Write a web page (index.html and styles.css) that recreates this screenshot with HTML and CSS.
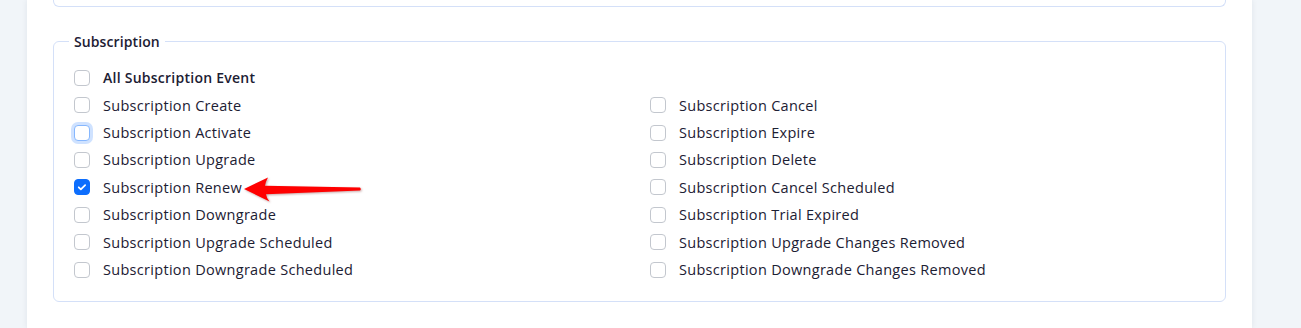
FILE: index.html
```html
<!DOCTYPE html>
<html lang="en">
<head>
  <meta charset="UTF-8" />
  <title>Subscription Events</title>
  <link rel="stylesheet" href="styles.css">
</head>
<body>
  <div class="page">
    <div class="top-box"></div>

    <fieldset class="group">
      <legend>Subscription</legend>

      <label class="check all"><span class="box"></span>All Subscription Event</label>

      <div class="grid">
        <div class="col">
          <label class="check"><span class="box"></span>Subscription Create</label>
          <label class="check"><span class="box focus"></span>Subscription Activate</label>
          <label class="check"><span class="box"></span>Subscription Upgrade</label>
          <label class="check"><span class="box checked"><svg viewBox="0 0 16 16" width="16" height="16"><path d="M4.3 8.3l2.4 2.4 4.9-4.9" fill="none" stroke="#fff" stroke-width="2" stroke-linecap="round" stroke-linejoin="round"/></svg></span>Subscription Renew</label>
          <label class="check"><span class="box"></span>Subscription Downgrade</label>
          <label class="check"><span class="box"></span>Subscription Upgrade Scheduled</label>
          <label class="check"><span class="box"></span>Subscription Downgrade Scheduled</label>
        </div>
        <div class="col">
          <label class="check"><span class="box"></span>Subscription Cancel</label>
          <label class="check"><span class="box"></span>Subscription Expire</label>
          <label class="check"><span class="box"></span>Subscription Delete</label>
          <label class="check"><span class="box"></span>Subscription Cancel Scheduled</label>
          <label class="check"><span class="box"></span>Subscription Trial Expired</label>
          <label class="check"><span class="box"></span>Subscription Upgrade Changes Removed</label>
          <label class="check"><span class="box"></span>Subscription Downgrade Changes Removed</label>
        </div>
      </div>
    </fieldset>
  </div>

  <!-- annotation arrow -->
  <svg class="arrow" width="126" height="34" viewBox="0 0 126 34">
    <path d="M4 17 L28 5.5 Q25.5 10 25 13.8 L120 15.6 Q121.5 17.2 120 18.6 L26 22.2 Q26.5 26 29.5 29.5 Z" fill="#ff0000"/>
  </svg>
</body>
</html>
```

FILE: styles.css
```css
* { box-sizing: border-box; }
body {
  margin: 0;
  background: #f1f5f9;
  font-family: 'Open Sans', sans-serif;
  font-size: 14.5px;
  color: #1c2033;
  position: relative;
  overflow: hidden;
  height: 328px;
}

.page {
  margin-left: 27px;
  width: 1225px;
  min-height: 328px;
  padding: 0 26px;
  background: #fff;
  box-shadow: 0 0 6px rgba(30, 40, 60, 0.08);
}

.top-box {
  height: 7px;
  border: 1px solid #d4e0f8;
  border-top: none;
  border-radius: 0 0 6px 6px;
}

.group {
  margin: 24px 0 0;
  padding: 12px 20px 18px;
  border: 1px solid #d4e0f8;
  border-radius: 6px;
  min-width: 0;
}

.group legend {
  padding: 0 5px;
  margin-left: -5px;
  font-size: 14px;
  font-weight: 600;
  line-height: 21px;
  letter-spacing: 0.1px;
}

.check {
  display: flex;
  align-items: center;
  height: 27.43px;
  letter-spacing: 0.3px;
  white-space: nowrap;
}

.check.all {
  font-size: 14px;
  font-weight: 600;
  letter-spacing: 0.25px;
}

.box {
  flex: none;
  width: 16px;
  height: 16px;
  margin-right: 13px;
  border: 1px solid #c3c7ce;
  border-radius: 4px;
  background: #fff;
  display: flex;
  align-items: center;
  justify-content: center;
}

.box svg {
  display: block;
  width: 14px;
  height: 14px;
}

.box.checked {
  background: #0d6efd;
  border-color: #0d6efd;
}

.box.focus {
  border-color: #86b7fe;
  box-shadow: 0 0 0 3px rgba(13, 110, 253, 0.2);
}

.grid {
  display: grid;
  grid-template-columns: 1fr 1fr;
  column-gap: 21px;
}

.arrow {
  position: absolute;
  left: 240px;
  top: 172px;
  filter: drop-shadow(1px 1.5px 1px rgba(90, 0, 0, 0.35));
}
```
